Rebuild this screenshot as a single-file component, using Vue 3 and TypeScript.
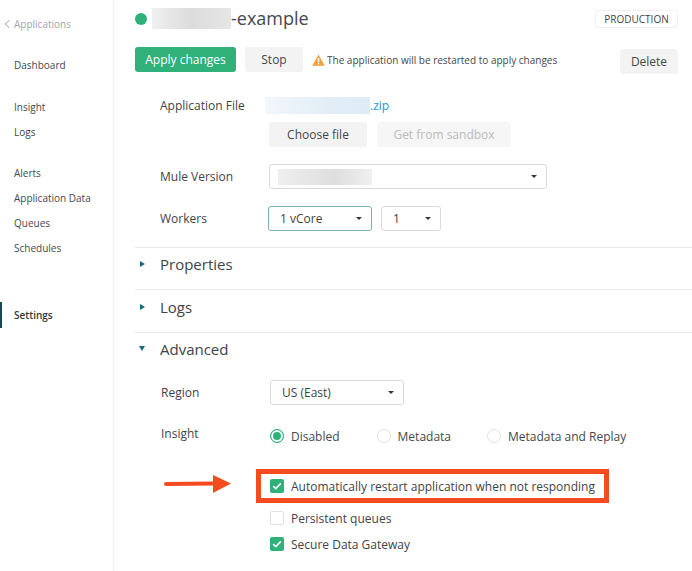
<template>
  <div class="page">
    <aside class="sidebar">
      <div class="back"><span class="chev"></span>Applications</div>
      <nav v-for="(group, i) in navGroups" :key="i" class="nav-group">
        <a v-for="item in group" :key="item" class="nav-item">{{ item }}</a>
      </nav>
      <a class="nav-item settings">Settings</a>
    </aside>

    <main class="main">
      <header class="title-row">
        <span class="status-dot"></span>
        <span class="blur-name"></span>
        <h1 class="title">-example</h1>
        <span class="env-badge">PRODUCTION</span>
      </header>

      <div class="actions">
        <button class="btn primary">Apply changes</button>
        <button class="btn stop">Stop</button>
        <svg class="warn" width="13" height="12" viewBox="0 0 14 13">
          <path d="M7 .5 13.7 12.6H.3Z" fill="#f0a13c" />
          <rect x="6.2" y="4.4" width="1.6" height="4.4" fill="#fff" />
          <rect x="6.2" y="9.6" width="1.6" height="1.6" fill="#fff" />
        </svg>
        <span class="warn-text">The application will be restarted to apply changes</span>
        <button class="btn delete">Delete</button>
      </div>

      <section class="app-form">
        <div class="file-row">
          <label class="field-label">Application File</label>
          <span class="file-link"><span class="blur-file"></span>.zip</span>
        </div>
        <div class="file-buttons">
          <button class="btn choose">Choose file</button>
          <button class="btn sandbox">Get from sandbox</button>
        </div>
        <div class="select-row mule">
          <label class="field-label">Mule Version</label>
          <div class="select wide"><span class="blur-version"></span><i class="caret"></i></div>
        </div>
        <div class="select-row workers">
          <label class="field-label">Workers</label>
          <div class="select core">1 vCore<i class="caret"></i></div>
          <div class="select count">1<i class="caret"></i></div>
        </div>
      </section>

      <section class="panel properties">
        <span class="tri right"></span>Properties
      </section>
      <section class="panel logs">
        <span class="tri right"></span>Logs
      </section>
      <section class="panel advanced">
        <span class="tri down"></span>Advanced
      </section>

      <section class="adv-body">
        <div class="adv-row region">
          <label class="adv-label">Region</label>
          <div class="select region-select">US (East)<i class="caret"></i></div>
        </div>
        <div class="adv-row insight">
          <label class="adv-label">Insight</label>
          <div class="radios">
            <span v-for="r in radios" :key="r.label" class="radio-item" :class="r.cls">
              <span class="radio" :class="{ on: r.on }"></span>{{ r.label }}
            </span>
          </div>
        </div>

        <div class="highlight-wrap">
          <svg class="arrow" width="68" height="20" viewBox="0 0 68 20">
            <path d="M2 10 50 9.5" stroke="#f54b20" stroke-width="4" stroke-linecap="round" />
            <path d="M49 1 67 9.5 49 19Z" fill="#f54b20" />
          </svg>
          <div class="highlight">
            <span class="check on">
              <svg width="10" height="8" viewBox="0 0 10 8"><path d="M1.2 4.2 3.8 6.6 8.8 1.4" fill="none" stroke="#fff" stroke-width="1.6" /></svg>
            </span>
            Automatically restart application when not responding
          </div>
        </div>
        <div class="check-row persistent"><span class="check"></span>Persistent queues</div>
        <div class="check-row secure">
          <span class="check on">
            <svg width="10" height="8" viewBox="0 0 10 8"><path d="M1.2 4.2 3.8 6.6 8.8 1.4" fill="none" stroke="#fff" stroke-width="1.6" /></svg>
          </span>
          Secure Data Gateway
        </div>
      </section>
    </main>
  </div>
</template>

<script setup lang="ts">
const navGroups: string[][] = [
  ['Dashboard'],
  ['Insight', 'Logs'],
  ['Alerts', 'Application Data', 'Queues', 'Schedules'],
]

const radios = [
  { label: 'Disabled', on: true, cls: 'r1' },
  { label: 'Metadata', on: false, cls: 'r2' },
  { label: 'Metadata and Replay', on: false, cls: 'r3' },
]
</script>

<style>
html,
body {
  margin: 0;
  background: #fff;
  overflow: hidden;
}
</style>

<style scoped>
.page {
  display: flex;
  width: 692px;
  height: 571px;
  overflow: hidden;
  font-family: "Open Sans", "Liberation Sans", sans-serif;
  color: #3f4347;
  background: #fff;
}

.sidebar {
  box-sizing: border-box;
  width: 114px;
  height: 571px;
  flex: none;
  border-right: 1px solid #eeeff0;
  padding-top: 15px;
  font-size: 10px;
}

.back {
  display: flex;
  align-items: center;
  height: 17px;
  padding-left: 6px;
  color: #a3a6a9;
  margin-bottom: 21px;
}

.chev {
  width: 5px;
  height: 5px;
  margin-right: 2px;
  border-left: 1px solid #b9bbbd;
  border-bottom: 1px solid #b9bbbd;
  transform: rotate(45deg);
}

.nav-group {
  display: flex;
  flex-direction: column;
  margin-bottom: 17px;
}

.nav-group:nth-of-type(2) {
  margin-bottom: 16px;
}

.nav-item {
  display: block;
  height: 25px;
  line-height: 25px;
  padding-left: 14px;
  color: #45494d;
}

.settings {
  margin-top: 41px;
  border-left: 2px solid #0f4a57;
  padding-left: 12px;
  height: 26px;
  line-height: 26px;
  font-weight: 600;
  color: #33373a;
}

.main {
  flex: 1;
  min-width: 0;
  padding-left: 21px;
}

.title-row {
  display: flex;
  align-items: center;
  height: 21px;
  margin-top: 8px;
  padding-right: 14px;
}

.status-dot {
  width: 12px;
  height: 12px;
  border-radius: 50%;
  background: #2fb179;
  margin-right: 5px;
}

.blur-name {
  width: 79px;
  height: 21px;
  background: linear-gradient(90deg, #f0f0f0, #dcdcdc 50%, #e6e6e6);
}

.title {
  margin: 0;
  font-size: 18px;
  font-weight: 400;
  line-height: 21px;
  color: #44484c;
}

.env-badge {
  box-sizing: border-box;
  margin-left: auto;
  width: 83px;
  height: 18px;
  border: 1px solid #f0f0f0;
  border-radius: 3px;
  font-size: 10px;
  line-height: 16px;
  text-align: center;
  color: #3f4347;
}

.actions {
  display: flex;
  align-items: center;
  height: 25px;
  margin-top: 18px;
  padding-right: 14px;
}

.btn {
  box-sizing: border-box;
  height: 25px;
  border: 0;
  border-radius: 3px;
  padding: 0;
  background: #f3f3f3;
  font: 400 12px/25px "Open Sans", "Liberation Sans", sans-serif;
  color: #44484c;
}

.primary {
  width: 101px;
  background: #2fb179;
  color: #fff;
}

.stop {
  width: 58px;
  margin-left: 9px;
}

.warn {
  margin-left: 9px;
  flex: none;
}

.warn-text {
  margin-left: 2px;
  font-size: 10px;
  color: #44484c;
  white-space: nowrap;
}

.delete {
  width: 58px;
  margin-left: auto;
  position: relative;
  top: 2px;
}

.app-form {
  padding-left: 25px;
}

.file-row {
  display: flex;
  align-items: center;
  height: 18px;
  margin-top: 24px;
}

.field-label {
  width: 105px;
  flex: none;
  font-size: 12px;
  color: #3f4347;
}

.file-link {
  display: flex;
  align-items: center;
  font-size: 12px;
  color: #2c96d8;
}

.blur-file {
  width: 105px;
  height: 17px;
  background: linear-gradient(90deg, #f2f7fb, #e2eef7 60%, #dfecf6);
}

.file-buttons {
  display: flex;
  gap: 10px;
  margin-top: 8px;
  padding-left: 109px;
}

.choose {
  width: 98px;
}

.sandbox {
  width: 134px;
  background: #f6f6f6;
  color: #b9bbbd;
}

.select-row {
  display: flex;
  align-items: center;
}

.mule {
  margin-top: 17px;
}

.mule .field-label,
.workers .field-label {
  width: 109px;
}

.workers {
  margin-top: 17px;
}

.select {
  position: relative;
  box-sizing: border-box;
  display: flex;
  align-items: center;
  height: 25px;
  border: 1px solid #dadbdc;
  border-radius: 3px;
  background: #fff;
  padding-left: 11px;
  font-size: 12px;
  color: #3f4347;
}

.caret {
  position: absolute;
  right: 9px;
  top: 10px;
  width: 0;
  height: 0;
  border-left: 3.5px solid transparent;
  border-right: 3.5px solid transparent;
  border-top: 3.5px solid #34383b;
}

.wide {
  width: 278px;
  padding-left: 8px;
}

.blur-version {
  width: 94px;
  height: 16px;
  background: linear-gradient(90deg, #efefef, #dedede 60%, #f0f0f0);
}

.core {
  width: 104px;
  border-color: #7fb0bd;
  margin-left: -1px;
}

.count {
  width: 60px;
  margin-left: 9px;
}

.panel {
  box-sizing: border-box;
  display: flex;
  align-items: center;
  font-size: 15px;
  color: #3f4347;
  border-top: 1px solid #eaeaeb;
  padding-left: 5px;
}

.properties {
  height: 42px;
  margin-top: 16px;
  padding-bottom: 10px;
}

.logs {
  height: 43px;
  padding-bottom: 8px;
}

.advanced {
  height: 36px;
  padding-bottom: 4px;
}

.tri {
  width: 0;
  height: 0;
  margin-right: 15px;
}

.tri.right {
  border-top: 3px solid transparent;
  border-bottom: 3px solid transparent;
  border-left: 5px solid #1a6a80;
}

.tri.down {
  margin-left: -1px;
  border-left: 3px solid transparent;
  border-right: 3px solid transparent;
  border-top: 5px solid #1a6a80;
}

.adv-body {
  padding-left: 26px;
  font-size: 12px;
}

.adv-row {
  display: flex;
  align-items: center;
}

.adv-label {
  width: 109px;
  flex: none;
  color: #3f4347;
}

.region {
  margin-top: 12px;
}

.region-select {
  width: 134px;
}

.insight {
  margin-top: 17px;
  align-items: flex-start;
  height: 25px;
}

.insight .adv-label {
  line-height: 24px;
}

.radios {
  display: flex;
  align-items: center;
  height: 30px;
  margin-top: -1px;
}

.radio-item {
  display: flex;
  align-items: center;
  color: #44484c;
}

.r2 {
  margin-left: 37px;
}

.r3 {
  margin-left: 36px;
}

.radio {
  box-sizing: border-box;
  width: 14px;
  height: 14px;
  margin-right: 7px;
  border: 1px solid #e0e1e2;
  border-radius: 50%;
  background: #fff;
}

.radio.on {
  border-color: #2fb179;
  box-shadow: inset 0 0 0 2px #fff;
  background: #2fb179;
}

.highlight-wrap {
  position: relative;
  margin-top: 22px;
  margin-left: 95px;
}

.arrow {
  position: absolute;
  left: -92px;
  top: 5px;
}

.highlight {
  box-sizing: border-box;
  display: flex;
  align-items: center;
  width: 353px;
  height: 34px;
  border: 5px solid #f54b20;
  padding-left: 9px;
  color: #3f4347;
  white-space: nowrap;
}

.check {
  box-sizing: border-box;
  display: flex;
  align-items: center;
  justify-content: center;
  width: 14px;
  height: 14px;
  flex: none;
  margin-right: 7px;
  border: 1px solid #e0e1e2;
  border-radius: 2px;
  background: #fff;
}

.check.on {
  border: 0;
  background: #2fb179;
}

.check-row {
  display: flex;
  align-items: center;
  height: 18px;
  padding-left: 109px;
  color: #3f4347;
}

.persistent {
  margin-top: 6px;
}

.secure {
  margin-top: 8px;
}
</style>
